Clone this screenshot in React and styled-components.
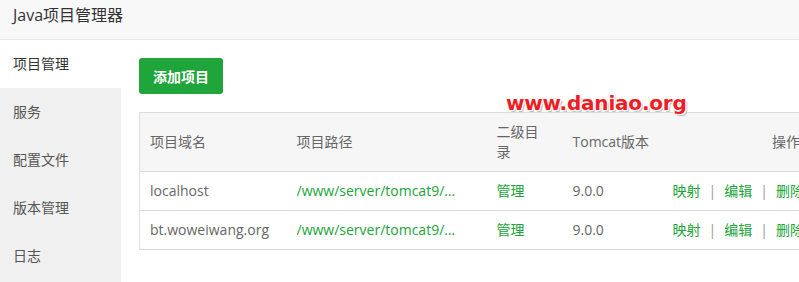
import React from 'react';
import styled, { createGlobalStyle } from 'styled-components';

const GlobalStyle = createGlobalStyle`
    html, body {
        margin: 0;
        padding: 0;
        background: #fff;
        font-family: "Open Sans", "Noto Sans CJK SC", sans-serif;
        font-size: 14px;
        color: #666;
    }
`;

const projects = [
    { domain: 'localhost', path: '/www/server/tomcat9/webapps/ROOT', version: '9.0.0' },
    { domain: 'bt.woweiwang.org', path: '/www/server/tomcat9/webapps/bt', version: '9.0.0' },
];

const menu = ['项目管理', '服务', '配置文件', '版本管理', '日志'];

const App = () => {
    return (
        <Page>
            <GlobalStyle />
            <TitleBar>Java项目管理器</TitleBar>
            <Body>
                <Sidebar>
                    {menu.map((m, i) => (
                        <MenuItem key={m} active={i === 0}>{m}</MenuItem>
                    ))}
                </Sidebar>
                <Content>
                    <AddButton type='button'>添加项目</AddButton>
                    <TableBox>
                        <Watermark>www.daniao.org</Watermark>
                        <Table>
                            <colgroup>
                                <col style={{ width: 147 }} />
                                <col style={{ width: 200 }} />
                                <col style={{ width: 76 }} />
                                <col style={{ width: 100 }} />
                                <col style={{ width: 148 }} />
                            </colgroup>
                            <thead>
                                <tr>
                                    <Th>项目域名</Th>
                                    <Th>项目路径</Th>
                                    <Th><Narrow>二级目录</Narrow></Th>
                                    <Th>Tomcat版本</Th>
                                    <Th align='right'>操作</Th>
                                </tr>
                            </thead>
                            <tbody>
                                {projects.map(p => (
                                    <tr key={p.domain}>
                                        <Td>{p.domain}</Td>
                                        <Td><PathLink title={p.path}>{p.path}</PathLink></Td>
                                        <Td><Link>管理</Link></Td>
                                        <Td>{p.version}</Td>
                                        <Td align='right'>
                                            <Link>映射</Link>
                                            <Sep>|</Sep>
                                            <Link>编辑</Link>
                                            <Sep>|</Sep>
                                            <Link>删除</Link>
                                        </Td>
                                    </tr>
                                ))}
                            </tbody>
                        </Table>
                    </TableBox>
                </Content>
            </Body>
        </Page>
    );
};

const Page = styled.div`
    width: 799px;
    height: 282px;
    overflow: hidden;
    display: flex;
    flex-direction: column;
`;

const TitleBar = styled.div`
    height: 39px;
    line-height: 31px;
    padding-left: 13px;
    background: #f8f8f8;
    border-bottom: 1px solid #e8e8e8;
    font-size: 16px;
    color: #333;
    flex-shrink: 0;
`;

const Body = styled.div`
    flex: 1;
    display: flex;
    min-height: 0;
`;

const Sidebar = styled.div`
    width: 121px;
    flex-shrink: 0;
    background: #f0f0f0;
`;

const MenuItem = styled.div`
    height: 48px;
    line-height: 48px;
    padding-left: 13px;
    color: ${p => (p.active ? '#333' : '#555')};
    background: ${p => (p.active ? '#fff' : 'transparent')};
`;

const Content = styled.div`
    flex: 1;
    padding: 18px 0 0 18px;
    display: flex;
    flex-direction: column;
    align-items: flex-start;
    gap: 18px;
    overflow: hidden;
`;

const AddButton = styled.button`
    height: 36px;
    padding: 0 14px;
    border: none;
    border-radius: 3px;
    background: #20a53a;
    color: #fff;
    font-family: "Noto Sans CJK SC", sans-serif;
    font-size: 14px;
    font-weight: 600;
    cursor: pointer;
`;

const TableBox = styled.div`
    position: relative;
`;

const Watermark = styled.div`
    position: absolute;
    left: 367px;
    top: -21px;
    z-index: 2;
    font-family: "DejaVu Sans", sans-serif;
    font-weight: bold;
    font-size: 20px;
    letter-spacing: -0.2px;
    color: #ee1c25;
    text-shadow: -1px -1px 0 #fff, 1px -1px 0 #fff, -1px 1px 0 #fff, 1px 1px 0 #fff,
        2px 2px 1px #bbb;
    white-space: nowrap;
`;

const Table = styled.table`
    width: 671px;
    table-layout: fixed;
    border-collapse: collapse;
    border: 1px solid #ddd;
`;

const Th = styled.th`
    background: #f6f6f6;
    font-weight: normal;
    text-align: ${p => p.align || 'left'};
    padding: 9px 10px;
    line-height: 20px;
    color: #666;
    border-bottom: 1px solid #ddd;
    white-space: nowrap;
`;

const Narrow = styled.span`
    display: inline-block;
    white-space: normal;
    width: 44px;
    vertical-align: middle;
`;

const Td = styled.td`
    text-align: ${p => p.align || 'left'};
    padding: 9px 10px;
    line-height: 20px;
    border-bottom: 1px solid #ddd;
    white-space: nowrap;
`;

const PathLink = styled.a`
    display: block;
    max-width: 168px;
    overflow: hidden;
    text-overflow: ellipsis;
    white-space: nowrap;
    color: #20a53a;
    cursor: pointer;
`;

const Link = styled.a`
    color: #20a53a;
    cursor: pointer;
`;

const Sep = styled.span`
    color: #999;
    margin: 0 8px;
`;

export default App;
